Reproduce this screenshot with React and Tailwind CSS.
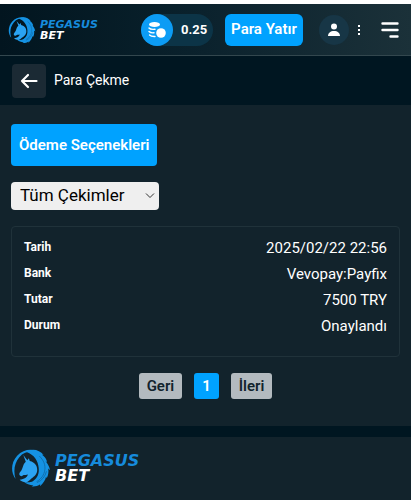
import React, { useState } from "react";

const cekimler = [
  {
    id: 1,
    tarih: "2025/02/22 22:56",
    bank: "Vevopay:Payfix",
    tutar: "7500 TRY",
    durum: "Onaylandı",
  },
];

const LogoIcon = ({ className }) => (
  <svg viewBox="16 10 130 124" className={className} aria-hidden="true">
    {/* ring */}
    <path
      d="M31 108C14 86 16 54 36 32 56 11 86 8 104 20c-24-6-47 0-61 17C27 56 23 82 31 108Z"
      fill="#1592e3"
    />
    {/* mane */}
    <path
      d="M70 16c20-8 40-2 52 14l-6-2c10 7 16 15 17 25l-5-4c8 10 13 18 15 30l-6-5c2 12 0 22-5 31l-2-5c-2 12-9 22-20 31l1-6c-8 6-18 8-28 7l6-3c-13-1-23-5-31-12 12 3 22 2 30-3 14-9 20-24 18-42-2-24-15-43-39-52Z"
      fill="#1592e3"
    />
    {/* head and neck */}
    <path
      d="m56 30 13 17 5-7 3 9c17 4 26 17 24 33-2 14-13 20-22 27-5 4-8 8-15 9-8 0-15-3-20-8 16-2 24-8 27-17-5 2-10 1-14 2-4 3-7 5-11 2-4-2-4-7-1-11 7-7 8-14 11-22 2-6 5-9 8-12Z"
      fill="#2ba3f2"
    />
    <path
      d="M109 34c14 14 19 28 17 44-2 16-11 29-26 38M131 84c-4 16-14 28-29 35"
      fill="none"
      stroke="#0c5c92"
      strokeWidth="2"
      strokeLinecap="round"
    />
  </svg>
);

const CoinsIcon = () => (
  <svg viewBox="0 0 20 20" className="size-5" fill="none" aria-hidden="true">
    <ellipse cx="7.500" cy="4.500" rx="5.500" ry="2.500" fill="#fff" />
    <path
      d="M2 8c1 1.300 3.500 1.600 6 1.300M2 11.500c1 1 3 1.500 5 1.300M2.500 15c1.200 1.200 3 1.600 5.500 1.500"
      stroke="#fff"
      strokeWidth="1.400"
      strokeLinecap="round"
    />
    <circle cx="14" cy="13" r="4.800" fill="#fff" />
  </svg>
);

const Satir = ({ baslik, deger }) => (
  <div className="flex h-[26px] items-start justify-between">
    <dt className="text-[12px] leading-6 font-bold">{baslik}</dt>
    <dd className="text-[15px] leading-[26px]">{deger}</dd>
  </div>
);

const App = () => {
  const [filtre, setFiltre] = useState("tum");

  return (
    <div className="min-h-screen bg-[#001621] font-['Roboto',sans-serif] text-white">
      <header className="flex h-14 items-center border-t-4 border-b border-t-white border-b-[#33474e] bg-linear-to-r from-[#02151f] via-[#0b222d] to-[#1b3139] pr-3 pl-2">
        <a href="#" aria-label="Pegasus Bet" className="flex items-center gap-1">
          <LogoIcon className="size-7" />
          <span className="font-['DejaVu_Sans',sans-serif] text-[11px] leading-[11px] font-bold italic">
            <span className="block text-[#168bdc]">PEGASUS</span>
            <span className="block">BET</span>
          </span>
        </a>
        <div className="ml-auto flex items-center">
          <div className="mr-3 flex h-8 w-[72px] items-center rounded-full bg-[#0c3447]">
            <span className="flex size-8 items-center justify-center rounded-full bg-[#0c9cf5]">
              <CoinsIcon />
            </span>
            <span className="ml-2 text-[13px] font-bold">0.25</span>
          </div>
          <button className="h-8 w-[78px] cursor-pointer rounded-md bg-[#00a2ff] text-[15px] font-semibold whitespace-nowrap">
            Para Yatır
          </button>
          <button
            aria-label="Profil"
            className="ml-4 flex size-[30px] cursor-pointer items-center justify-center rounded-full bg-[#173646]"
          >
            <svg viewBox="0 0 12 14" className="h-[14px] w-3" fill="#fff">
              <circle cx="6" cy="3.500" r="3" />
              <path d="M0 13c0-3 2.500-5 6-5s6 2 6 5Z" />
            </svg>
          </button>
          <button
            aria-label="Seçenekler"
            className="flex h-8 w-5 cursor-pointer items-center justify-center"
          >
            <svg viewBox="0 0 4 12" className="h-3 w-1" fill="#fff">
              <rect x="1" y="1" width="2" height="2" />
              <rect x="1" y="5" width="2" height="2" />
              <rect x="1" y="9" width="2" height="2" />
            </svg>
          </button>
          <button aria-label="Menü" className="ml-3 cursor-pointer">
            <svg
              viewBox="0 0 18 16"
              className="h-4 w-[18px]"
              stroke="#fff"
              strokeWidth="2.400"
              strokeLinecap="round"
            >
              <path d="M1.500 1.500h15M1.500 8h15M9.500 14.500h7" />
            </svg>
          </button>
        </div>
      </header>

      <div className="flex h-[49px] items-center gap-2 px-3">
        <button
          aria-label="Geri dön"
          className="flex h-[34px] w-[34px] cursor-pointer items-center justify-center rounded-sm bg-[#1b2a34]"
        >
          <svg
            viewBox="0 0 18 16"
            className="h-4 w-[18px]"
            fill="none"
            stroke="#fff"
            strokeWidth="2.200"
            strokeLinecap="round"
            strokeLinejoin="round"
          >
            <path d="M16.500 8H2M8 2 2 8l6 6" />
          </svg>
        </button>
        <h1 className="text-[14px]">Para Çekme</h1>
      </div>

      <main className="bg-[#12232c] px-[11px] pt-[19px] pb-[27px]">
        <button className="block h-[42px] cursor-pointer rounded-sm bg-[#00a2ff] px-2 text-[15px] font-semibold">
          Ödeme Seçenekleri
        </button>

        <div className="relative mt-4 w-[148px]">
          <select
            aria-label="Çekim filtresi"
            value={filtre}
            onChange={(e) => setFiltre(e.target.value)}
            className="block h-7 w-full appearance-none rounded-sm bg-[#efefef] pl-[9px] text-[17px] text-black"
          >
            <option value="tum">Tüm Çekimler</option>
          </select>
          <svg
            viewBox="0 0 10 6"
            className="pointer-events-none absolute top-[11px] right-1 h-[6px] w-[10px]"
            fill="none"
            stroke="#333"
          >
            <path d="m1 .5 4 4 4-4" />
          </svg>
        </div>

        {cekimler.map((c) => (
          <dl
            key={c.id}
            className="mt-4 rounded-sm border border-[#20323a] px-3 pt-2 pb-[17px]"
          >
            <Satir baslik="Tarih" deger={c.tarih} />
            <Satir baslik="Bank" deger={c.bank} />
            <Satir baslik="Tutar" deger={c.tutar} />
            <Satir baslik="Durum" deger={c.durum} />
          </dl>
        ))}

        <nav
          aria-label="Sayfalar"
          className="mt-4 flex justify-center gap-3 text-[15px] font-semibold"
        >
          <button className="h-[26px] cursor-pointer rounded-[3px] bg-[#b3babf] px-2 text-[#12232c]">
            Geri
          </button>
          <button className="h-[26px] cursor-pointer rounded-[3px] bg-[#00a2ff] px-2">
            1
          </button>
          <button className="h-[26px] cursor-pointer rounded-[3px] bg-[#b3babf] px-2 text-[#12232c]">
            İleri
          </button>
        </nav>
      </main>

      <footer className="mt-[11px] bg-[#12232c] px-[11px] pt-[11px] pb-3">
        <a href="#" aria-label="Pegasus Bet" className="flex items-center gap-1">
          <LogoIcon className="size-10" />
          <span className="font-['DejaVu_Sans',sans-serif] text-[16px] leading-[15px] font-bold italic">
            <span className="block text-[#168bdc]">PEGASUS</span>
            <span className="block">BET</span>
          </span>
        </a>
      </footer>
    </div>
  );
};

export default App;
